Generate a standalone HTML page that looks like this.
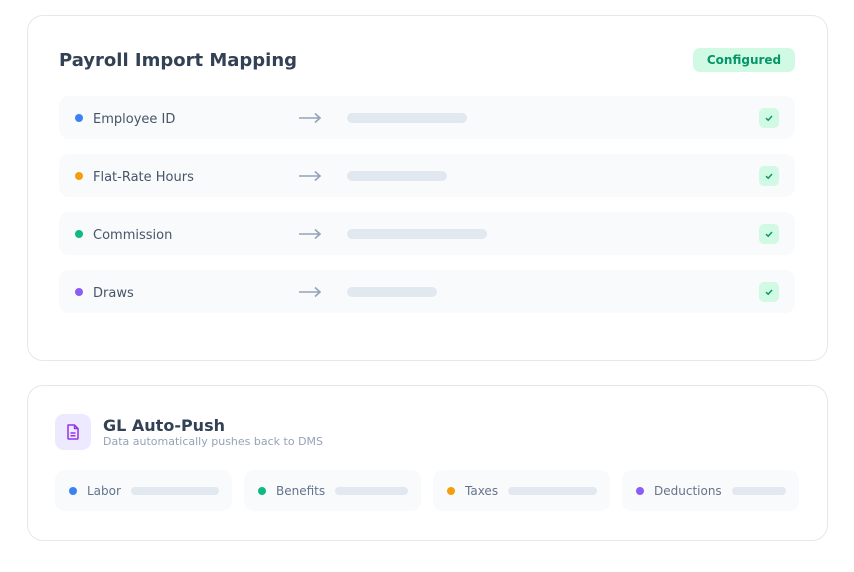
<!DOCTYPE html>
<html><head><meta charset="utf-8"><style>
*{box-sizing:border-box;margin:0;padding:0}
body{width:854px;height:572px;background:#fff;font-family:"DejaVu Sans","Liberation Sans",sans-serif;position:relative;overflow:hidden}
.card{position:absolute;left:27px;width:801px;border:1px solid #e5e7eb;border-radius:16px;background:#fff}
.title{position:absolute;left:31px;top:34px;font-size:18px;font-weight:bold;color:#334155}
.badge{position:absolute;left:665px;top:32px;width:102px;height:24px;border-radius:7px;background:#d1fae5;color:#059669;font-size:12px;font-weight:bold;text-align:center;line-height:24px}
.row{position:absolute;left:31px;width:736px;height:43px;background:#f8fafc;border-radius:10px}
.dot{position:absolute;width:8px;height:8px;border-radius:50%}
.row .dot{left:16px;top:18px}
.row .lbl{position:absolute;left:34px;top:16px;font-size:13px;color:#475569}
.row svg.ar{position:absolute;left:239px;top:16px}
.row .bar{position:absolute;left:288px;top:17px;height:10px;border-radius:5px;background:#e2e8f0}
.row .ck{position:absolute;left:700px;top:12px;width:20px;height:20px;border-radius:5px;background:#d1fae5}
.ck svg{position:absolute;left:5px;top:5px}
.chip{position:absolute;top:84px;width:177px;height:41px;background:#f8fafc;border-radius:10px;display:flex;align-items:center;padding:0 13px 0 14px}
.chip .dot{position:static;margin-right:10px;flex:none}
.chip span{font-size:12px;color:#64748b;margin-right:10px}
.chip i{flex:1;height:8px;border-radius:4px;background:#e2e8f0}
</style></head><body>
<div class="card" style="top:15px;height:346px">
<div class="title">Payroll Import Mapping</div>
<div class="badge">Configured</div>

<div class="row" style="top:80px"><div class="dot" style="background:#3b82f6"></div><div class="lbl">Employee ID</div>
<svg class="ar" width="24" height="12" viewBox="0 0 24 12"><path d="M1 6H22M17 1.5L22 6L17 10.5" stroke="#94a3b8" stroke-width="1.6" fill="none"/></svg>
<div class="bar" style="width:120px"></div><div class="ck"><svg width="10" height="10" viewBox="0 0 10 10"><path d="M2 5.2L4.2 7.2L8 3" stroke="#059669" stroke-width="1.4" fill="none"/></svg></div></div>

<div class="row" style="top:138px"><div class="dot" style="background:#f59e0b"></div><div class="lbl">Flat-Rate Hours</div>
<svg class="ar" width="24" height="12" viewBox="0 0 24 12"><path d="M1 6H22M17 1.5L22 6L17 10.5" stroke="#94a3b8" stroke-width="1.6" fill="none"/></svg>
<div class="bar" style="width:100px"></div><div class="ck"><svg width="10" height="10" viewBox="0 0 10 10"><path d="M2 5.2L4.2 7.2L8 3" stroke="#059669" stroke-width="1.4" fill="none"/></svg></div></div>

<div class="row" style="top:196px"><div class="dot" style="background:#10b981"></div><div class="lbl">Commission</div>
<svg class="ar" width="24" height="12" viewBox="0 0 24 12"><path d="M1 6H22M17 1.5L22 6L17 10.5" stroke="#94a3b8" stroke-width="1.6" fill="none"/></svg>
<div class="bar" style="width:140px"></div><div class="ck"><svg width="10" height="10" viewBox="0 0 10 10"><path d="M2 5.2L4.2 7.2L8 3" stroke="#059669" stroke-width="1.4" fill="none"/></svg></div></div>

<div class="row" style="top:254px"><div class="dot" style="background:#8b5cf6"></div><div class="lbl">Draws</div>
<svg class="ar" width="24" height="12" viewBox="0 0 24 12"><path d="M1 6H22M17 1.5L22 6L17 10.5" stroke="#94a3b8" stroke-width="1.6" fill="none"/></svg>
<div class="bar" style="width:90px"></div><div class="ck"><svg width="10" height="10" viewBox="0 0 10 10"><path d="M2 5.2L4.2 7.2L8 3" stroke="#059669" stroke-width="1.4" fill="none"/></svg></div></div>
</div>

<div class="card" style="top:385px;height:156px">
<div style="position:absolute;left:27px;top:28px;width:36px;height:36px;border-radius:9px;background:#ede9fe">
<svg style="position:absolute;left:9px;top:9px" width="18" height="18" viewBox="0 0 18 18"><path d="M4 2H10.5L14 5.5V15.2a.8.8 0 0 1-.8.8H4.8a.8.8 0 0 1-.8-.8V2.8A.8.8 0 0 1 4.8 2Z M10.5 2V5.5H14 M6.5 10H11.5 M6.5 12.8H11.5" stroke="#9333ea" stroke-width="1.5" fill="none" stroke-linejoin="round"/></svg></div>
<div style="position:absolute;left:75px;top:30px;font-size:16px;font-weight:bold;color:#334155">GL Auto-Push</div>
<div style="position:absolute;left:75px;top:49px;font-size:11px;color:#94a3b8">Data automatically pushes back to DMS</div>
<div class="chip" style="left:27px"><div class="dot" style="background:#3b82f6"></div><span>Labor</span><i></i></div>
<div class="chip" style="left:216px"><div class="dot" style="background:#10b981"></div><span>Benefits</span><i></i></div>
<div class="chip" style="left:405px"><div class="dot" style="background:#f59e0b"></div><span>Taxes</span><i></i></div>
<div class="chip" style="left:594px"><div class="dot" style="background:#8b5cf6"></div><span>Deductions</span><i></i></div>
</div>
</body></html>
